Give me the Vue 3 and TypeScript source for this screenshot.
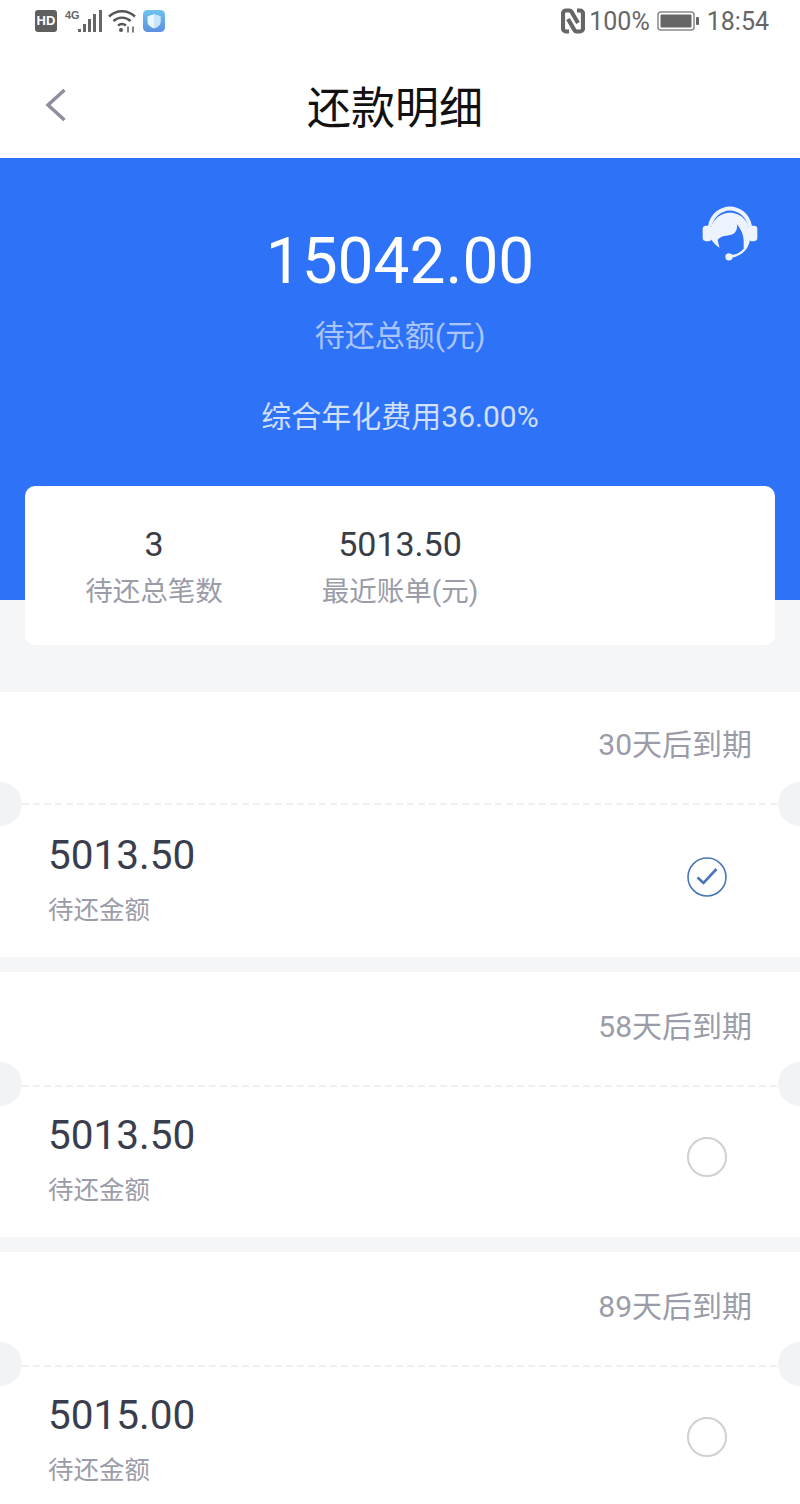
<template>
  <div class="page">
    <div class="status-bar">
      <div class="status-left">
        <span class="hd">HD</span>
        <svg class="signal" width="38" height="24" viewBox="0 0 38 24">
          <text x="1" y="10" class="net">4G</text>
          <rect x="14" y="20" width="3" height="3" fill="#666" />
          <rect x="19" y="15" width="3" height="8" fill="#666" />
          <rect x="24" y="10" width="3" height="13" fill="#666" />
          <rect x="29" y="5" width="3" height="18" fill="#666" />
          <rect x="35" y="1" width="3" height="22" fill="#666" />
        </svg>
        <svg class="wifi" width="28" height="24" viewBox="0 0 28 24" fill="none" stroke="#555" stroke-width="2.400">
          <path d="M1 7.500c7.500-7 18.500-7 26 0" />
          <path d="M5.500 12c5-4.500 12-4.500 17 0" />
          <path d="M10 16.500c2.500-2 5.500-2 8 0" />
          <circle cx="13" cy="21" r="2" fill="#555" stroke="none" />
          <path d="M20 17.500v6M25 17.500v6" stroke-width="1.500" />
        </svg>
        <svg width="22" height="22" viewBox="0 0 24 24">
          <defs>
            <linearGradient id="shieldBg" x1="0" y1="0" x2="0" y2="1">
              <stop offset="0" stop-color="#6cc4ee" />
              <stop offset="1" stop-color="#5c90e0" />
            </linearGradient>
          </defs>
          <rect width="24" height="24" rx="5" fill="url(#shieldBg)" />
          <path d="M12 4.500l7 2.200v6c0 3.500-3 5.800-7 7.300-4-1.500-7-3.800-7-7.300v-6z" fill="#eaf6fd" />
          <path d="M12 4.500l7 2.200v6c0 3.500-3 5.800-7 7.300z" fill="#c9e6f8" />
        </svg>
      </div>
      <div class="status-right">
        <svg class="nfc" width="24" height="26" viewBox="0 0 24 26" fill="none" stroke="#666" stroke-width="4.200">
          <path d="M8 23.500H5a3 3 0 0 1-3-3v-15a3 3 0 0 1 3-3h3.500c1 0 1.500.5 2 1.300L17 15" />
          <path d="M16 2.500h3a3 3 0 0 1 3 3v15a3 3 0 0 1-3 3h-3.500c-1 0-1.500-.5-2-1.300L7 11" />
        </svg>
        <span>100%</span>
        <svg class="battery" width="42" height="20" viewBox="0 0 42 20">
          <rect x="1" y="1" width="36" height="18" rx="3" fill="none" stroke="#888" stroke-width="1.500" />
          <rect x="3.500" y="3.500" width="31" height="13" rx="1" fill="#666" />
          <rect x="39" y="6" width="3" height="8" rx="1" fill="#666" />
        </svg>
        <span>18:54</span>
      </div>
    </div>

    <header class="nav">
      <svg class="back" width="24" height="36" viewBox="0 0 24 36" fill="none" stroke="#8d8f9e" stroke-width="3.500">
        <path d="M20.500 3L4 18l16.500 15" />
      </svg>
      <h1>还款明细</h1>
    </header>

    <section class="hero">
      <svg class="service" width="60" height="57" viewBox="60 40 180 170">
        <g fill="#eef4ff">
          <path d="M84 106C90 66 124 47 150 47s60 19 66 59h-11C198 78 175 59 150 59s-48 19-55 47z" />
          <rect x="68" y="105" width="28" height="46" rx="10" />
          <rect x="204" y="105" width="28" height="46" rx="10" />
          <path d="M90 130c0-36 27-64 60-64s60 28 60 64c0 15-5 30-14 42h-74c-18-10-32-26-32-42z" />
        </g>
        <path class="face" d="M113 147c15-19 39-7 52-22 7-9 7-18 5-25 12 12 21 32 21 50v36h-66c-6-12-10-26-12-39z" />
        <path d="M206 150c-6 28-28 45-56 47" fill="none" stroke="#eef4ff" stroke-width="7" />
        <circle cx="147" cy="198" r="11" fill="#eef4ff" />
      </svg>
      <div class="total">15042.00</div>
      <div class="total-label">待还总额(元)</div>
      <div class="rate">综合年化费用36.00%</div>
    </section>

    <div class="summary">
      <div v-for="s in stats" :key="s.label" class="stat">
        <div class="stat-value">{{ s.value }}</div>
        <div class="stat-label">{{ s.label }}</div>
      </div>
      <div class="stat"></div>
    </div>

    <div class="list">
      <div v-for="b in bills" :key="b.due" class="bill">
        <div class="bill-top">{{ b.due }}</div>
        <div class="bill-bottom">
          <div>
            <div class="amount">{{ b.amount }}</div>
            <div class="amount-label">待还金额</div>
          </div>
          <svg v-if="b.checked" class="tick" width="40" height="40" viewBox="0 0 40 40" fill="none" stroke="#4a76b8">
            <circle cx="20" cy="20" r="19" stroke-width="1.600" />
            <path d="M10.500 20.500l6 5.500 13-14" stroke-width="2.600" />
          </svg>
          <span v-else class="tick radio"></span>
        </div>
      </div>
    </div>
  </div>
</template>

<script setup lang="ts">
interface Bill {
  due: string;
  amount: string;
  checked: boolean;
}

const stats = [
  { value: "3", label: "待还总笔数" },
  { value: "5013.50", label: "最近账单(元)" },
];

const bills: Bill[] = [
  { due: "30天后到期", amount: "5013.50", checked: true },
  { due: "58天后到期", amount: "5013.50", checked: false },
  { due: "89天后到期", amount: "5015.00", checked: false },
];
</script>

<style>
html,
body {
  margin: 0;
  background: #f5f6f8;
}
</style>

<style scoped>
.page {
  width: 800px;
  height: 1504px;
  overflow: hidden;
  background: #f5f6f8;
  font-family: Roboto, "Noto Sans CJK SC", sans-serif;
}

.status-bar {
  height: 42px;
  background: #fff;
  display: flex;
  justify-content: space-between;
  align-items: center;
  padding: 0 31px 0 35px;
  color: #666;
  font-size: 25px;
}

.status-left,
.status-right {
  display: flex;
  align-items: center;
}

.status-left {
  gap: 7px;
}

.hd {
  width: 22px;
  height: 22px;
  border-radius: 3px;
  background: #5f5f5f;
  color: #fff;
  font-size: 13px;
  font-weight: 700;
  line-height: 22px;
  text-align: center;
  font-family: "Liberation Sans", sans-serif;
}

.net {
  font-size: 11px;
  font-weight: 700;
  fill: #666;
  font-family: "Liberation Sans", sans-serif;
}

.wifi {
  margin-left: -1px;
}

.nfc {
  margin-right: 4px;
}

.battery {
  margin: 0 8px 0 7px;
}

.nav {
  height: 116px;
  box-sizing: border-box;
  padding-top: 10px;
  background: #fff;
  display: flex;
  align-items: center;
  justify-content: center;
  position: relative;
}

.back {
  position: absolute;
  left: 44px;
  top: 45px;
}

.nav h1 {
  margin: 0 10px 0 0;
  font-size: 44px;
  font-weight: 400;
  color: #111;
}

.hero {
  height: 442px;
  background: #2e72f8;
  position: relative;
  color: #fff;
  text-align: center;
  overflow: hidden;
}

.service {
  position: absolute;
  left: 700px;
  top: 46px;
}

.face {
  fill: #2e72f8;
}

.total {
  font-size: 64px;
  line-height: 76px;
  padding-top: 66px;
}

.total-label {
  font-size: 30px;
  line-height: 40px;
  margin-top: 16px;
  color: rgba(255, 255, 255, 0.6);
}

.rate {
  font-size: 30px;
  line-height: 40px;
  margin-top: 41px;
  color: rgba(255, 255, 255, 0.78);
}

.summary {
  position: relative;
  margin: -114px 25px 0;
  height: 159px;
  background: #fff;
  border-radius: 10px;
  display: grid;
  grid-template-columns: repeat(3, 1fr);
  text-align: center;
}

.stat-value {
  font-size: 34px;
  line-height: 40px;
  margin-top: 38px;
  color: #3a3d46;
}

.stat-label {
  font-size: 27.500px;
  line-height: 40px;
  margin-top: 8px;
  color: #9a9ca8;
}

.stat:first-child {
  margin-right: -6px;
  margin-left: -6px;
  transform: translateX(4px);
}

.list {
  margin-top: 47px;
  display: flex;
  flex-direction: column;
  gap: 15px;
}

.bill {
  height: 265px;
  background: #fff;
  position: relative;
}

.bill::before,
.bill::after {
  content: "";
  position: absolute;
  top: 90px;
  width: 44px;
  height: 44px;
  border-radius: 50%;
  background: #f2f3f5;
}

.bill::before {
  left: -22px;
}

.bill::after {
  right: -22px;
}

.bill-top {
  height: 113px;
  box-sizing: border-box;
  padding: 33px 48px 0 0;
  text-align: right;
  font-size: 30px;
  line-height: 40px;
  color: #9a9ca8;
  background: repeating-linear-gradient(90deg, #eeeff1 0 7px, transparent 7px 11px) left bottom / 100% 2px no-repeat;
}

.bill + .bill .bill-top {
  height: 115px;
  padding-top: 35px;
}

.bill-bottom {
  display: flex;
  justify-content: space-between;
  align-items: center;
  padding: 25px 73px 0 48px;
}

.bill + .bill .bill-bottom {
  padding-top: 23px;
}

.amount {
  font-size: 40.500px;
  line-height: 50px;
  color: #3a3d4d;
}

.amount-label {
  font-size: 25.500px;
  line-height: 36px;
  margin-top: 12px;
  color: #9a9ca8;
}

.tick {
  margin-bottom: 4px;
}

.radio {
  box-sizing: border-box;
  width: 40px;
  height: 40px;
  border: 2px solid #cfd0d3;
  border-radius: 50%;
}
</style>
